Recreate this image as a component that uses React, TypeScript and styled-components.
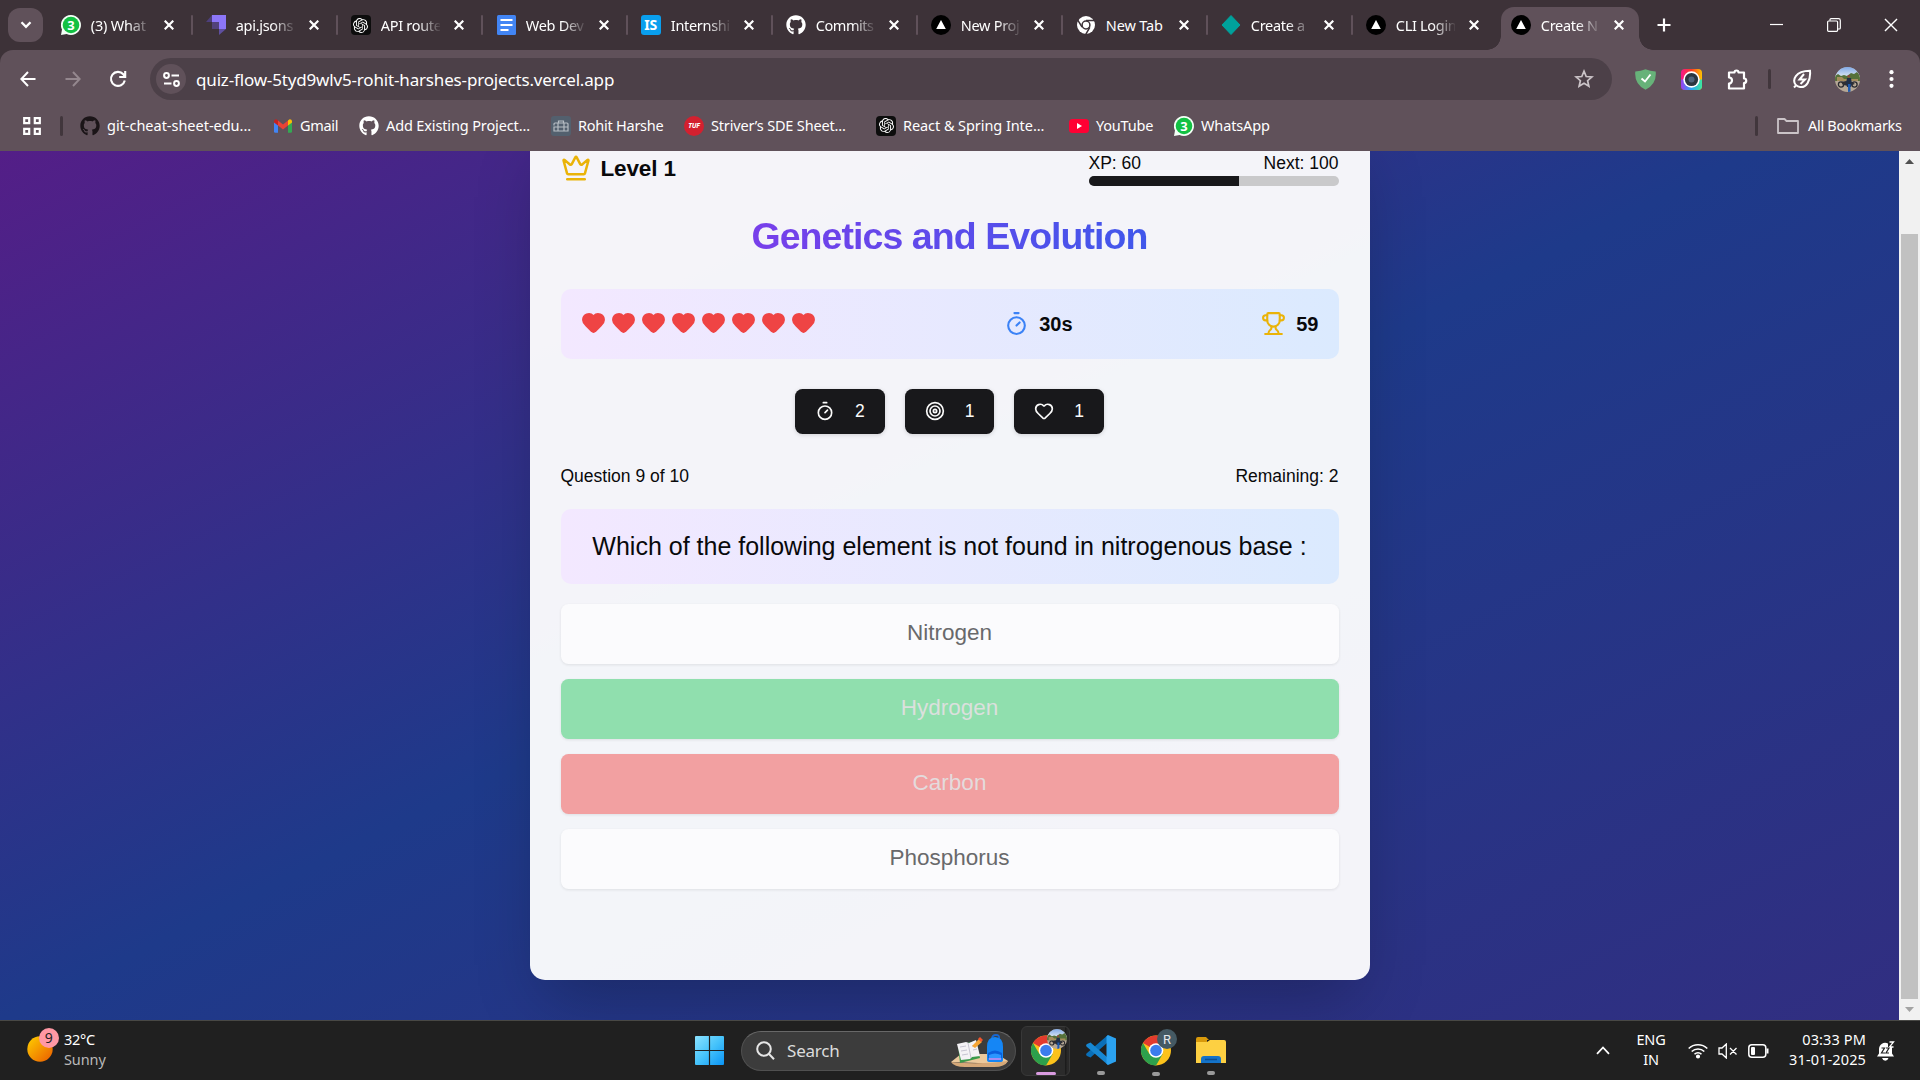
import React from 'react';
import styled, { createGlobalStyle, css } from 'styled-components';
import { Crown, Heart, Timer, Trophy, Target } from 'lucide-react';
import { FaGithub } from 'react-icons/fa';
import { SiOpenai } from 'react-icons/si';

const uiFont = '"Noto Sans", "Open Sans", sans-serif';
const pageFont = '"Liberation Sans", Arial, sans-serif';

const GlobalStyle = createGlobalStyle`
  *, *::before, *::after { box-sizing: border-box; }
  body { margin: 0; background: #202020; overflow: hidden; }
  svg { display: block; flex: none; }
`;

const Screen = styled.div`
  width: 1920px;
  height: 1080px;
  display: flex;
  flex-direction: column;
  overflow: hidden;
  font-family: ${uiFont};
`;

/* ---------- tab strip ---------- */

const TabStrip = styled.div`
  height: 50px;
  flex: none;
  display: flex;
  background: #3d3238;
  padding-left: 8px;
  color: #fff;
`;

const TabSearch = styled.button`
  width: 35px;
  height: 34px;
  margin: 8px 5px 0 0;
  padding: 0;
  border: 0;
  border-radius: 12px;
  background: #60515a;
  color: #fff;
  display: flex;
  align-items: center;
  justify-content: center;
`;

const Tab = styled.div<{ $active?: boolean }>`
  position: relative;
  width: 145px;
  height: 50px;
  display: flex;
  align-items: center;
  padding-left: 12.600px;
  ${p => p.$active && css`
    z-index: 0;
    &::before {
      content: '';
      position: absolute;
      z-index: -1;
      inset: 7px 4px 0 3px;
      border-radius: 13px 13px 0 0;
      background: #60515a;
    }
    &::after {
      content: '';
      position: absolute;
      z-index: -1;
      left: -11px;
      right: -10px;
      bottom: 0;
      height: 14px;
      background:
        radial-gradient(circle at 0 0, transparent 13.5px, #60515a 14px) left / 14px 14px no-repeat,
        radial-gradient(circle at 100% 0, transparent 13.5px, #60515a 14px) right / 14px 14px no-repeat;
    }
  `}
`;

const TabLabel = styled.span<{ $fade: boolean; $spacing: number }>`
  width: 59px;
  margin-left: 10.200px;
  white-space: nowrap;
  font-size: 14.5px;
  line-height: 22px;
  letter-spacing: ${p => p.$spacing}px;
  ${p => p.$fade && css`mask-image: linear-gradient(90deg, #000 62%, transparent 103%);`}
`;

const TabClose = styled.span`
  width: 20px;
  margin-left: 9.200px;
  display: flex;
  justify-content: center;
`;

const TabDivider = styled.i`
  width: 2.5px;
  height: 20px;
  margin-left: auto;
  border-radius: 2px;
  background: #60515a;
`;

const NewTab = styled.div`
  width: 41px;
  height: 50px;
  display: flex;
  align-items: center;
  justify-content: center;
`;

const WindowControls = styled.div`
  margin-left: auto;
  padding-right: 1px;
  height: 50px;
  display: flex;
  > span {
    width: 57px;
    display: flex;
    align-items: center;
    justify-content: center;
  }
`;

/* ---------- toolbar ---------- */

const ToolArea = styled.div`
  background: #3d3238;
  flex: none;
`;

const ToolPanel = styled.div`
  height: 101px;
  background: #60515a;
  border-radius: 13px 13px 0 0;
  color: #fff;
  display: flex;
  flex-direction: column;
`;

const AddressRow = styled.div`
  height: 50px;
  padding-top: 8px;
  display: flex;
  align-items: flex-start;
`;

const NavButton = styled.span<{ $dim?: boolean; $width: number }>`
  width: ${p => p.$width}px;
  flex: none;
  height: 42px;
  display: flex;
  align-items: center;
  justify-content: center;
  color: ${p => (p.$dim ? '#94878e' : '#fff')};
`;

const Omnibox = styled.div`
  width: 1462px;
  flex: none;
  height: 42px;
  border-radius: 21px;
  background: #4c4048;
  display: flex;
  align-items: center;
  padding: 0 18px 0 6px;
`;

const SiteInfo = styled.span`
  width: 30px;
  height: 30px;
  border-radius: 50%;
  background: #60515a;
  display: flex;
  align-items: center;
  justify-content: center;
`;

const Url = styled.span`
  margin-left: 10px;
  flex: 1;
  padding-top: 2px;
  font-size: 17px;
  letter-spacing: -0.165px;
  line-height: 24px;
`;

const ToolDivider = styled.i<{ $left: number }>`
  width: 3px;
  flex: none;
  height: 20px;
  border-radius: 2px;
  margin-left: ${p => p.$left}px;
  background: #41363c;
`;

const BookmarkRow = styled.div`
  height: 51px;
  padding: 0 0 0 22px;
  display: flex;
  align-items: center;
`;

const Bookmark = styled.span<{ $width: number; $spacing: number }>`
  width: ${p => p.$width}px;
  flex: none;
  display: flex;
  align-items: center;
  gap: 7px;
  white-space: nowrap;
  font-size: 14.5px;
  line-height: 20px;
  letter-spacing: ${p => p.$spacing}px;
`;

const BookmarkText = styled.span`
  padding-bottom: 2px;
`;

const Tile = styled.span<{ $bg: string; $radius: string; $size?: number }>`
  width: 20px;
  height: 20px;
  flex: none;
  border-radius: ${p => p.$radius};
  background: ${p => p.$bg};
  color: #fff;
  font-weight: 700;
  font-size: ${p => p.$size ?? 12}px;
  line-height: 20px;
  letter-spacing: -0.3px;
  display: flex;
  align-items: center;
  justify-content: center;
`;

/* ---------- web page ---------- */

const Viewport = styled.div`
  height: 869px;
  flex: none;
  display: flex;
  overflow: hidden;
`;

const Scroller = styled.div`
  flex: 1;
  overflow: hidden;
`;

const Page = styled.main`
  height: 940px;
  margin-top: -71px;
  padding: 40px 0;
  display: flex;
  justify-content: center;
  background: linear-gradient(to bottom right, #581c87, #1e3a8a, #312e81);
  font-family: ${pageFont};
  color: #09090b;
`;

const Card = styled.section`
  width: 840px;
  height: 860px;
  padding: 31px 31px 0;
  border-radius: 15px;
  background: rgba(255, 255, 255, 0.95);
  box-shadow: 0 31px 62px -15px rgba(0, 0, 0, 0.25);
`;

const Row = styled.div`
  display: flex;
  justify-content: space-between;
  align-items: center;
`;

const Level = styled.div`
  display: flex;
  align-items: center;
  gap: 10px;
  font-size: 22.5px;
  line-height: 33px;
  padding-bottom: 1px;
  font-weight: 700;
  letter-spacing: -0.15px;
  svg { color: #eab308; }
`;

const Xp = styled.div`
  width: 250px;
`;

const SmallRow = styled(Row)`
  font-size: 17.5px;
  line-height: 25px;
`;

const ProgressTrack = styled.div`
  height: 10px;
  border-radius: 5px;
  overflow: hidden;
  background: #c9c9cb;
`;

const ProgressFill = styled.div`
  height: 100%;
  background: #18181b;
`;

const Title = styled.h1`
  margin: 28px 0 30px;
  font-size: 37.5px;
  line-height: 45px;
  letter-spacing: -0.025em;
  text-align: center;
  background: linear-gradient(to right, #9333ea, #2563eb);
  background-clip: text;
  color: transparent;
`;

const Stats = styled(Row)`
  height: 70px;
  padding: 0 20px;
  border-radius: 10px;
  background: linear-gradient(to right, #f3e8ff, #dbeafe);
`;

const Hearts = styled.div`
  display: flex;
  gap: 5px;
  padding-bottom: 3px;
  color: #ef4444;
`;

const Stat = styled.div<{ $color: string }>`
  display: flex;
  align-items: center;
  gap: 10px;
  font-size: 20px;
  line-height: 29px;
  font-weight: 700;
  svg { color: ${p => p.$color}; margin-bottom: 1px; }
`;

const Powers = styled.div`
  display: flex;
  justify-content: center;
  gap: 20px;
  margin: 30px 0;
`;

const Power = styled.button`
  height: 45px;
  padding: 0 20px 1px;
  border: 0;
  border-radius: 7.5px;
  background: #18181b;
  color: #fafafa;
  font: 17.5px/25px ${pageFont};
  display: flex;
  align-items: center;
  gap: 20px;
  box-shadow: 0 1px 4px rgba(0, 0, 0, 0.15);
`;

const Question = styled.div`
  height: 75px;
  margin: 20px 0;
  border-radius: 10px;
  background: linear-gradient(to right, #f3e8ff, #dbeafe);
  font-size: 25px;
  line-height: 75px;
  text-align: center;
`;

const Options = styled.div`
  display: grid;
  gap: 15px;
`;

const tones = {
  plain: ['#fbfbfd', '#69696b'],
  right: ['#90dfae', '#dbe0dd'],
  wrong: ['#f2a0a1', '#e4dbdc'],
};

const Option = styled.button<{ $tone: keyof typeof tones }>`
  height: 60px;
  padding: 0 0 3px;
  border: 0;
  border-radius: 7.5px;
  background: ${p => tones[p.$tone][0]};
  color: ${p => tones[p.$tone][1]};
  font: 22.5px/35px ${pageFont};
  box-shadow: 0 1px 3px rgba(0, 0, 0, 0.09);
`;

const Scrollbar = styled.div`
  width: 21px;
  padding: 0 2px;
  background: #f1f1f1;
  display: flex;
  flex-direction: column;
`;

const ScrollArrow = styled.span`
  height: 21px;
  display: flex;
  align-items: center;
  justify-content: center;
`;

const Thumb = styled.div`
  height: 765px;
  margin-top: 62px;
  background: #c1c1c1;
`;

/* ---------- taskbar ---------- */

const Taskbar = styled.footer`
  flex: 1;
  border-top: 1px solid #484845;
  background: #202020;
  color: #fff;
  display: flex;
`;

const Weather = styled.div`
  width: 695px;
  padding: 7px 0 0 27px;
  display: flex;
  gap: 4px;
  font-size: 14.5px;
  line-height: 20px;
  letter-spacing: -0.3px;
  small { display: block; font-size: inherit; color: #b9b9b9; letter-spacing: -0.1px; }
`;

const WeatherText = styled.div`
  padding-top: 1px;
`;

const Apps = styled.div`
  display: flex;
  align-items: center;
`;

const SearchBox = styled.div`
  width: 275px;
  height: 40px;
  margin: 0 5px 0 17px;
  padding: 0 6px 0 14px;
  border: 1px solid #505050;
  border-top-color: #686868;
  border-radius: 20px;
  background: #3c3c3c;
  display: flex;
  align-items: center;
  font-size: 17px;
  color: #dcdcdc;
  letter-spacing: -0.2px;
  span { flex: 1; margin-left: 12px; }
`;

const AppSlot = styled.div<{ $active?: boolean }>`
  width: 55px;
  height: 50px;
  display: flex;
  flex-direction: column;
  align-items: center;
  padding-top: 9px;
  ${p => p.$active && css`
    width: 49px;
    margin-right: 3px;
    border: 1px solid #383838;
    padding-top: 8px;
    border-radius: 6px;
    background: linear-gradient(90deg, #2b2b2b 43px, #1c1c1c 43px, #1c1c1c 44px, #292929 45px);
  `}
`;

const Indicator = styled.i<{ $active?: boolean }>`
  width: ${p => (p.$active ? 20 : 8)}px;
  height: 4px;
  margin-top: 6px;
  border-radius: 2px;
  background: ${p => (p.$active ? '#d99be0' : '#9a9a9a')};
`;

const BadgedIcon = styled.svg`
  margin: -6px 0 0 7px;
`;

const Tray = styled.div`
  margin-left: auto;
  display: flex;
  align-items: center;
  padding-right: 25px;
`;

const TrayText = styled.div<{ $width: number; $align: 'center' | 'right'; $spacing: number }>`
  width: ${p => p.$width}px;
  text-align: ${p => p.$align};
  font-size: 14.5px;
  line-height: 20px;
  letter-spacing: ${p => p.$spacing}px;
  padding-bottom: 3px;
  white-space: nowrap;
`;

const TrayIcons = styled.div`
  display: flex;
  align-items: center;
  gap: 10px;
  margin: 0 19px 0 18px;
`;

/* ---------- drawings ---------- */

const Cross = ({ size = 10, w = 2.2 }: { size?: number; w?: number }) => (
  <svg width={size} height={size} viewBox="0 0 10 10" stroke="currentColor" strokeWidth={w} fill="none">
    <path d="M.7.7l8.6 8.6M9.3.7L.7 9.3" />
  </svg>
);

const WhatsAppIcon = () => (
  <svg width="20" height="20" viewBox="0 0 20 20">
    <path d="M10 0a10 10 0 1 1-4.4 19L0 20l1-5.4A10 10 0 0 1 10 0z" fill="#f3fff6" />
    <circle cx="10" cy="10" r="8.3" fill="#12c143" />
    <text x="10" y="14.6" textAnchor="middle" fontSize="13" fontWeight="700" fill="#fff" fontFamily='"Noto Sans"'>3</text>
  </svg>
);

const JsonServerIcon = () => (
  <svg width="20" height="20" viewBox="0 0 20 20">
    <path d="M6 0h14v14h-7V7H6z" fill="#8c76f8" />
    <path d="M6 0v7H0z" fill="#4d3f7c" />
    <path d="M6 7h7v7H6z" fill="#52427a" />
    <path d="M13 14h7l-7 6z" fill="#5f4fa0" />
  </svg>
);

const DocsIcon = () => (
  <svg width="20" height="20" viewBox="0 0 20 20">
    <rect x="1" width="19" height="20" rx="1.5" fill="#4285f4" />
    <path d="M4.500 5h12M4.500 10h12M4.500 15h8" stroke="#fff" strokeWidth="2" />
  </svg>
);

const VercelIcon = () => (
  <svg width="20" height="20" viewBox="0 0 20 20">
    <circle cx="10" cy="10" r="10" fill="#000" />
    <path d="M10 5l4.8 9H5.2z" fill="#fff" />
  </svg>
);

const ChromeMono = () => (
  <svg width="20" height="20" viewBox="0 0 20 20">
    <circle cx="10" cy="10" r="9" fill="#fff" />
    <circle cx="10" cy="10" r="3.9" fill="#fff" stroke="#3d3238" strokeWidth="1.5" />
    <path d="M10 5.6h9M6.1 12.2L1.6 4.8M13.8 12.3L9.6 19.6" stroke="#3d3238" strokeWidth="1.5" />
  </svg>
);

const DiamondIcon = () => (
  <svg width="20" height="20" viewBox="0 0 20 20">
    <path d="M10 .5l9 9.5-9 9.5L1 10z" fill="#00a19b" stroke="#00a19b" strokeLinejoin="round" />
  </svg>
);

const GmailIcon = () => (
  <svg width="20" height="20" viewBox="0 0 20 20">
    <path d="M1 5v10.500a1.200 1.200 0 0 0 1.200 1.200H5V8z" fill="#4285f4" />
    <path d="M19 5v10.500a1.200 1.200 0 0 1-1.200 1.200H15V8z" fill="#34a853" />
    <path d="M5 4.600l5 3.900 5-3.900V9.500l-5 3.900-5-3.900z" fill="#ea4335" />
    <path d="M1 5.500C1 3.400 3.300 2.800 4.400 3.900L5 4.500v5L1 6.500z" fill="#c5221f" />
    <path d="M19 5.500c0-2.100-2.300-2.700-3.400-1.600l-.6.600v5l4-3z" fill="#fbbc04" />
  </svg>
);

const ToolboxIcon = () => (
  <svg width="20" height="20" viewBox="0 0 20 20">
    <rect width="20" height="20" rx="3" fill="#53606e" />
    <path d="M3 9.500V8a1 1 0 0 1 1-1h12a1 1 0 0 1 1 1v7H3v-4h14M7.500 7V5h5v2M7 7v8M13 7v8" fill="none" stroke="#b7bdc4" strokeWidth="1.200" />
  </svg>
);

const YouTubeIcon = () => (
  <svg width="20" height="20" viewBox="0 0 20 20">
    <rect x="0" y="3" width="20" height="14" rx="3.500" fill="#ff0033" />
    <path d="M8 7l5 3-5 3z" fill="#fff" />
  </svg>
);

const GptIcon = () => (
  <Tile $bg="#0d0d0d" $radius="4px"><SiOpenai size={15} /></Tile>
);

const Photo = ({ size }: { size: number }) => (
  <svg width={size} height={size} viewBox="0 0 25 25">
    <defs>
      <clipPath id="avatarClip"><circle cx="12.500" cy="12.500" r="12.500" /></clipPath>
      <linearGradient id="avatarSky" x2="0" y2="1">
        <stop offset="0" stopColor="#7fa9e8" /><stop offset="1" stopColor="#dfe8f3" />
      </linearGradient>
    </defs>
    <g clipPath="url(#avatarClip)">
      <rect width="25" height="25" fill="#b5a795" />
      <rect width="25" height="10" fill="url(#avatarSky)" />
      <path d="M0 9l3-2 3 2 3-1 3 1 4-3 3 1 3-2 3 3v6H0z" fill="#55713a" />
      <path d="M2 10h5l2 2h14v2H2z" fill="#a58c5c" />
      <g fill="none" stroke="#2b2c31" strokeWidth="1.300">
        <circle cx="6" cy="17.500" r="2.600" /><circle cx="19.500" cy="17.500" r="2.600" />
      </g>
      <path d="M6 15l5-1 6 1 3 2-6 2-6-1z" fill="#2f2f33" />
      <path d="M12 11h4l1 6-1 3H12l-1-4z" fill="#203048" />
      <path d="M13 17h2.500v8H13z" fill="#1f5bb0" />
      <circle cx="13.800" cy="9.300" r="1.400" fill="#8b4a3c" />
    </g>
  </svg>
);

const ChromeColor = ({ children }: { children: React.ReactNode }) => (
  <BadgedIcon width="37" height="37" viewBox="0 0 37 37">
    <circle cx="15" cy="21.500" r="15" fill="#fcc21b" />
    <path d="M15 21.500L2 14A15 15 0 0 1 28 14z" fill="#e33b2e" />
    <path d="M15 14h13v1.500H15z" fill="#e33b2e" />
    <path d="M15 21.500L21.500 25.200 15 36.500A15 15 0 0 1 2 14l6.500 11.200z" fill="#2da04c" />
    <circle cx="15" cy="21.500" r="7.300" fill="#fff" />
    <circle cx="15" cy="21.500" r="5.800" fill="#3b7ded" />
    {children}
  </BadgedIcon>
);

const VsCode = () => (
  <svg width="30" height="30" viewBox="0 0 30 30">
    <path d="M22 0l-1 8L4.500 22.500 1 21c-1.200-1-1.200-2 0-3z" fill="#0a6fb8" />
    <path d="M22 30l-1-8L4.500 7.500 1 9c-1.200 1-1.200 2 0 3z" fill="#1787d2" />
    <path d="M22 0l8 3.500v23L22 30l-1.500-1.200V1.200z" fill="#2ba2f0" />
  </svg>
);

const FolderApp = () => (
  <svg width="30" height="30" viewBox="0 0 30 30">
    <path d="M0 4a2 2 0 0 1 2-2h8l3 3h-2v6H0z" fill="#d99a0b" />
    <path d="M0 7h11l3-2h14a2 2 0 0 1 2 2v21H0z" fill="#fdd042" />
    <path d="M5 28v-4a3 3 0 0 1 3-3h14a3 3 0 0 1 3 3v4z" fill="#1473c9" />
    <path d="M9 24.500h12" stroke="#0a4f93" strokeWidth="1.500" />
  </svg>
);

const SearchArt = () => (
  <svg width="60" height="34" viewBox="0 0 60 34">
    <path d="M2 28L12 20h36l11 7-3 3z" fill="#ecc99c" />
    <path d="M2 28q28 3 57-1-3 6-14 6H16Q5 33 2 28z" fill="#d5a878" />
    <path d="M9 11l18-4 4 17-20 5z" fill="#3a9a4b" />
    <path d="M8 10l9-2 3 1 7-3 4 16-8 1-2 2-9 1z" fill="#f4f2f5" />
    <path d="M19 9l3 15M11 13l6-1M12 17l6-1M13 21l6-1M23 12l4-1M24 16l4-1" stroke="#bab7c6" strokeWidth=".8" />
    <path d="M23 12l7-7 3 3-7 6z" fill="#f6a534" />
    <path d="M29 5l2-2 3 3-2 2z" fill="#f2552c" />
    <path d="M43 5q0-4 4-4t3 4" fill="none" stroke="#1767d2" strokeWidth="1.800" />
    <path d="M38 13q0-10 8-10t8 10v13q0 2-3 2H41q-3 0-3-2z" fill="#1586f5" />
    <path d="M39 19q7-5 14 0v5H39z" fill="#0a5fdc" />
    <path d="M40 21q6-3 12 0v3l-12 1z" fill="#2a96ff" />
    <path d="M40 25h12" stroke="#b58cf4" strokeWidth="1.800" />
  </svg>
);

/* ---------- data ---------- */

const tabs: { icon: React.ReactNode; label: string; fade?: boolean; spacing?: number }[] = [
  { icon: <WhatsAppIcon />, label: '(3) What', spacing: -0.2 },
  { icon: <JsonServerIcon />, label: 'api.jsons' },
  { icon: <GptIcon />, label: 'API route' },
  { icon: <DocsIcon />, label: 'Web Dev' },
  { icon: <Tile $bg="#0a9fee" $radius="3px" $size={14}>IS</Tile>, label: 'Internshi' },
  { icon: <FaGithub size={20} />, label: 'Commits', spacing: -0.45 },
  { icon: <VercelIcon />, label: 'New Proj' },
  { icon: <ChromeMono />, label: 'New Tab', fade: false, spacing: -0.15 },
  { icon: <DiamondIcon />, label: 'Create a' },
  { icon: <VercelIcon />, label: 'CLI Login' },
  { icon: <VercelIcon />, label: 'Create N' },
];

const bookmarks: { icon: React.ReactNode; label: string; width: number; spacing: number }[] = [
  { icon: <FaGithub size={20} color="#1b1518" />, label: 'git-cheat-sheet-edu...', width: 193, spacing: -0.02 },
  { icon: <GmailIcon />, label: 'Gmail', width: 86, spacing: -0.3 },
  { icon: <FaGithub size={20} />, label: 'Add Existing Project...', width: 192, spacing: -0.13 },
  { icon: <ToolboxIcon />, label: 'Rohit Harshe', width: 133, spacing: -0.25 },
  { icon: <Tile $bg="#d3202f" $radius="50%" $size={7}><i>TUF</i></Tile>, label: 'Striver’s SDE Sheet...', width: 192, spacing: -0.17 },
  { icon: <GptIcon />, label: 'React & Spring Inte...', width: 193, spacing: -0.07 },
  { icon: <YouTubeIcon />, label: 'YouTube', width: 105, spacing: -0.2 },
  { icon: <WhatsAppIcon />, label: 'WhatsApp', width: 100, spacing: -0.15 },
];

const options: { label: string; tone: keyof typeof tones }[] = [
  { label: 'Nitrogen', tone: 'plain' },
  { label: 'Hydrogen', tone: 'right' },
  { label: 'Carbon', tone: 'wrong' },
  { label: 'Phosphorus', tone: 'plain' },
];

const xp = 60;
const nextXp = 100;

/* ---------- sections ---------- */

const BrowserTabs = () => (
  <TabStrip>
    <TabSearch>
      <svg width="12" height="8" viewBox="0 0 12 8" fill="none" stroke="currentColor" strokeWidth="2.300"><path d="M1.500 1.200L6 5.800l4.500-4.600" /></svg>
    </TabSearch>
    {tabs.map((t, i) => (
      <Tab key={i} $active={i === 10}>
        {t.icon}
        <TabLabel $fade={t.fade !== false} $spacing={t.spacing ?? -0.3}>{t.label}</TabLabel>
        <TabClose><Cross /></TabClose>
        {i < 9 && <TabDivider />}
      </Tab>
    ))}
    <NewTab>
      <svg width="14" height="14" viewBox="0 0 14 14" stroke="currentColor" strokeWidth="2.200"><path d="M7 .5v13M.5 7h13" /></svg>
    </NewTab>
    <WindowControls>
      <span><svg width="13" height="13" viewBox="0 0 13 13"><path d="M0 5.500h13" stroke="#fff" strokeWidth="1.200" /></svg></span>
      <span>
        <svg width="14" height="14" viewBox="0 0 14 14" fill="none" stroke="#fff" strokeWidth="1.200">
          <rect x=".6" y="3" width="10" height="10.300" rx="1" />
          <path d="M3 2.800V1.500Q3 .7 4 .7h7.500q1.800 0 1.800 1.800V10q0 1-1 1h-1.500" />
        </svg>
      </span>
      <span><Cross size={14} w={1} /></span>
    </WindowControls>
  </TabStrip>
);

const Toolbar = () => (
  <ToolArea>
    <ToolPanel>
      <AddressRow>
        <NavButton $width={55}>
          <svg width="16" height="16" viewBox="0 0 16 16" fill="none" stroke="currentColor" strokeWidth="2"><path d="M15.500 8H1.500M8 1L1.300 8 8 15" /></svg>
        </NavButton>
        <NavButton $width={35} $dim>
          <svg width="16" height="16" viewBox="0 0 16 16" fill="none" stroke="currentColor" strokeWidth="2"><path d="M.5 8h14M8 1l6.700 7L8 15" /></svg>
        </NavButton>
        <NavButton $width={55}>
          <svg width="18" height="18" viewBox="0 0 18 18" fill="none" stroke="currentColor" strokeWidth="2.100"><path d="M15.800 10.500A7 7 0 1 1 14.300 4.300L16 6.500M16.200 1v6h-6" /></svg>
        </NavButton>
        <NavButton $width={5} />
        <Omnibox>
          <SiteInfo>
            <svg width="17" height="15" viewBox="0 0 17 15" fill="none" stroke="#fff" strokeWidth="2">
              <circle cx="3.500" cy="3.500" r="2.400" /><path d="M8.500 3.500H16M1 11.500h7.500" /><circle cx="13.500" cy="11.500" r="2.400" />
            </svg>
          </SiteInfo>
          <Url>quiz-flow-5tyd9wlv5-rohit-harshes-projects.vercel.app</Url>
          <svg width="20" height="20" viewBox="0 0 20 20" fill="none" stroke="#cbc4c8" strokeWidth="1.700">
            <path d="M10 2.200l2.200 5.300 5.700.5-4.300 3.700 1.300 5.600L10 14.300l-4.900 3 1.300-5.600L2.100 8l5.700-.5z" />
          </svg>
        </Omnibox>
        <NavButton $width={66}>
          <svg width="21" height="21" viewBox="0 0 21 21"><path d="M10.500.3Q15 2.200 20.700 2.500 22 15 10.500 20.800-1 15 .3 2.500 6 2.200 10.500.3z" fill="#67b279" /><path d="M6.500 9.500l3.500 3 5.500-7" stroke="#fff" strokeWidth="1.900" fill="none" /></svg>
        </NavButton>
        <NavButton $width={26}>
          <svg width="21" height="21" viewBox="0 0 21 21">
            <defs>
              <linearGradient id="camTop"><stop offset="0" stopColor="#f5188c" /><stop offset=".5" stopColor="#ff3b20" /><stop offset="1" stopColor="#ffc400" /></linearGradient>
              <linearGradient id="camLow"><stop offset="0" stopColor="#9b3df0" /><stop offset=".5" stopColor="#2aa8f5" /><stop offset="1" stopColor="#3ce89d" /></linearGradient>
            </defs>
            <rect width="21" height="21" rx="4" fill="url(#camTop)" />
            <path d="M0 10.500h21V17a4 4 0 0 1-4 4H4a4 4 0 0 1-4-4z" fill="url(#camLow)" />
            <circle cx="10.500" cy="10.500" r="8.200" fill="#fff" /><circle cx="10.500" cy="10.500" r="6.600" fill="#2b3640" /><circle cx="10.500" cy="10.500" r="3" fill="#50647a" />
          </svg>
        </NavButton>
        <NavButton $width={67}>
          <svg width="21" height="21" viewBox="0 0 21 21" fill="none" stroke="currentColor" strokeWidth="2.200" strokeLinejoin="round">
            <path d="M2 3.500h5.500a2 2 0 0 1 4 0h5.500v6a2 2 0 0 1 0 4.500v5.500H2v-5a2.700 2.700 0 0 0 0-6z" />
          </svg>
        </NavButton>
        <NavButton $width={0}><ToolDivider $left={-4} /></NavButton>
        <NavButton $width={62}>
          <svg width="20" height="20" viewBox="0 0 20 20" fill="none" stroke="currentColor" strokeWidth="2">
            <path d="M2 18.500l2-2.200M3.800 16C0 11 3 2 18 1.800 19 12 14 19 8 18c-2-.2-3-1-4.200-2z" /><path d="M12 5l-4.500 5.500H13L8.500 15" />
          </svg>
        </NavButton>
        <NavButton $width={28}><Photo size={25} /></NavButton>
        <NavButton $width={60}>
          <svg width="5" height="18" viewBox="0 0 5 18" fill="currentColor"><circle cx="2.500" cy="2.200" r="2.100" /><circle cx="2.500" cy="9" r="2.100" /><circle cx="2.500" cy="15.800" r="2.100" /></svg>
        </NavButton>
      </AddressRow>
      <BookmarkRow>
        <svg width="20" height="20" viewBox="0 0 20 20" fill="none" stroke="#fff" strokeWidth="2.200"><path d="M2.200 2.200h5v5h-5zM12.800 2.200h5v5h-5zM2.200 12.800h5v5h-5zM12.800 12.800h5v5h-5z" /></svg>
        <ToolDivider $left={18} />
        <NavButton $width={17} />
        {bookmarks.map(b => (
          <Bookmark key={b.label} $width={b.width} $spacing={b.spacing}>{b.icon}<BookmarkText>{b.label}</BookmarkText></Bookmark>
        ))}
        <ToolDivider $left={481} />
        <NavButton $width={19} />
        <Bookmark $width={126} $spacing={-0.3}>
          <svg width="24" height="16" viewBox="0 0 24 16" fill="none" stroke="#cbc4c8" strokeWidth="1.800" strokeLinejoin="round"><path d="M1 1h6.500l2 2H21v12H1z" /></svg>
          <BookmarkText>All Bookmarks</BookmarkText>
        </Bookmark>
      </BookmarkRow>
    </ToolPanel>
  </ToolArea>
);

const Quiz = () => (
  <Page>
    <Card>
      <Row>
        <Level><Crown size={30} />Level 1</Level>
        <Xp>
          <SmallRow><span>XP: {xp}</span><span>Next: {nextXp}</span></SmallRow>
          <ProgressTrack><ProgressFill style={{ width: `${(xp / nextXp) * 100}%` }} /></ProgressTrack>
        </Xp>
      </Row>
      <Title>Genetics and Evolution</Title>
      <Stats>
        <Hearts>{Array.from({ length: 8 }, (_, i) => <Heart key={i} size={25} fill="currentColor" />)}</Hearts>
        <Stat $color="#3b82f6"><Timer size={25} />30s</Stat>
        <Stat $color="#eab308"><Trophy size={25} />59</Stat>
      </Stats>
      <Powers>
        <Power><Timer size={20} />2</Power>
        <Power><Target size={20} />1</Power>
        <Power><Heart size={20} />1</Power>
      </Powers>
      <SmallRow><span>Question 9 of 10</span><span>Remaining: 2</span></SmallRow>
      <Question>Which of the following element is not found in nitrogenous base :</Question>
      <Options>
        {options.map(o => <Option key={o.label} $tone={o.tone}>{o.label}</Option>)}
      </Options>
    </Card>
  </Page>
);

const WindowsTaskbar = () => (
  <Taskbar>
    <Weather>
      <svg width="33" height="36" viewBox="0 0 33 36">
        <defs><linearGradient id="sun" x2="1" y2="1"><stop offset="0" stopColor="#ffd000" /><stop offset="1" stopColor="#ea5b00" /></linearGradient></defs>
        <circle cx="13" cy="21" r="12.700" fill="url(#sun)" />
        <circle cx="22" cy="10" r="10" fill="#ff98a4" />
        <text x="21.500" y="15" textAnchor="middle" fontSize="14" fill="#222" fontFamily='"Noto Sans"'>9</text>
      </svg>
      <WeatherText>32°C<small>Sunny</small></WeatherText>
    </Weather>
    <Apps>
      <svg width="29" height="29" viewBox="0 0 29 29">
        <defs><linearGradient id="win" x2="1" y2="1"><stop offset="0" stopColor="#8be2ff" /><stop offset=".5" stopColor="#46c3fb" /><stop offset="1" stopColor="#0a94f5" /></linearGradient></defs>
        <path d="M0 1a1 1 0 0 1 1-1h12.900v13.900H0zM15.100 0H28a1 1 0 0 1 1 1v12.900H15.100zM0 15.100h13.900V29H1a1 1 0 0 1-1-1zM15.100 15.100H29V28a1 1 0 0 1-1 1H15.100z" fill="url(#win)" />
      </svg>
      <SearchBox>
        <svg width="19" height="19" viewBox="0 0 19 19" fill="none" stroke="#e6e6e6" strokeWidth="2"><circle cx="8" cy="8" r="6.800" /><path d="M12.800 12.800l5.200 5.400" /></svg>
        <span>Search</span>
        <SearchArt />
      </SearchBox>
      <AppSlot $active>
        <ChromeColor><svg x="16" y="0" width="20" height="20"><Photo size={20} /></svg></ChromeColor>
        <Indicator $active />
      </AppSlot>
      <AppSlot><VsCode /><Indicator /></AppSlot>
      <AppSlot>
        <ChromeColor>
          <circle cx="26" cy="10" r="10" fill="#455a64" />
          <text x="26" y="15" textAnchor="middle" fontSize="13" fill="#e5e9eb" fontFamily="Roboto">R</text>
        </ChromeColor>
        <Indicator />
      </AppSlot>
      <AppSlot><FolderApp /><Indicator /></AppSlot>
    </Apps>
    <Tray>
      <svg width="14" height="9" viewBox="0 0 14 9" fill="none" stroke="#fff" strokeWidth="1.800"><path d="M1 7.800l6-6.300 6 6.300" /></svg>
      <NavButton $width={22} />
      <TrayText $width={38} $align="center" $spacing={-0.25}>ENG<br />IN</TrayText>
      <TrayIcons>
        <svg width="20" height="16" viewBox="0 0 20 16" fill="none" stroke="#fff" strokeWidth="1.600">
          <path d="M.7 5.500a13.500 13.500 0 0 1 18.600 0M3.700 8.500a9 9 0 0 1 12.600 0M6.500 11.300a5 5 0 0 1 7 0" /><circle cx="10" cy="13.500" r="1.300" fill="#fff" />
        </svg>
        <svg width="20" height="16" viewBox="0 0 20 16" fill="none" stroke="#fff" strokeWidth="1.300">
          <path d="M1 5h3l4.300-4v14L4 11H1zM12 5l6.500 6.500M18.500 5L12 11.500" />
        </svg>
        <svg width="21" height="14" viewBox="0 0 21 14" fill="none" stroke="#fff" strokeWidth="1.500">
          <rect x=".8" y=".8" width="17" height="12.400" rx="3" /><rect x="3" y="3" width="4" height="8" rx="1" fill="#fff" stroke="none" /><path d="M19.500 4.500v5" strokeWidth="2" />
        </svg>
      </TrayIcons>
      <TrayText $width={78} $align="right" $spacing={0.12}>03:33 PM<br />31-01-2025</TrayText>
      <NavButton $width={11} />
      <svg width="18" height="20" viewBox="0 0 18 20" fill="#fff">
        <path d="M0 15.500l2-3V8a6.200 6.200 0 0 1 9-5.500V6h4v6.500l2 3zM5 17h6.500q-.8 2.700-3.200 2.700T5 17z" />
        <path d="M12.500 1h4l-4 5h4" fill="none" stroke="#fff" strokeWidth="1.300" />
        <path d="M4.500 7h3l-3 5h3.500M9 7h3L9 12h3" fill="none" stroke="#202020" strokeWidth="1.200" />
      </svg>
    </Tray>
  </Taskbar>
);

export default function App() {
  return (
    <Screen>
      <GlobalStyle />
      <BrowserTabs />
      <Toolbar />
      <Viewport>
        <Scroller><Quiz /></Scroller>
        <Scrollbar>
          <ScrollArrow><svg width="9" height="5" viewBox="0 0 9 5"><path d="M0 5l4.500-5L9 5z" fill="#505050" /></svg></ScrollArrow>
          <Thumb />
          <ScrollArrow><svg width="9" height="5" viewBox="0 0 9 5"><path d="M0 0l4.500 5L9 0z" fill="#a3a3a3" /></svg></ScrollArrow>
        </Scrollbar>
      </Viewport>
      <WindowsTaskbar />
    </Screen>
  );
}
